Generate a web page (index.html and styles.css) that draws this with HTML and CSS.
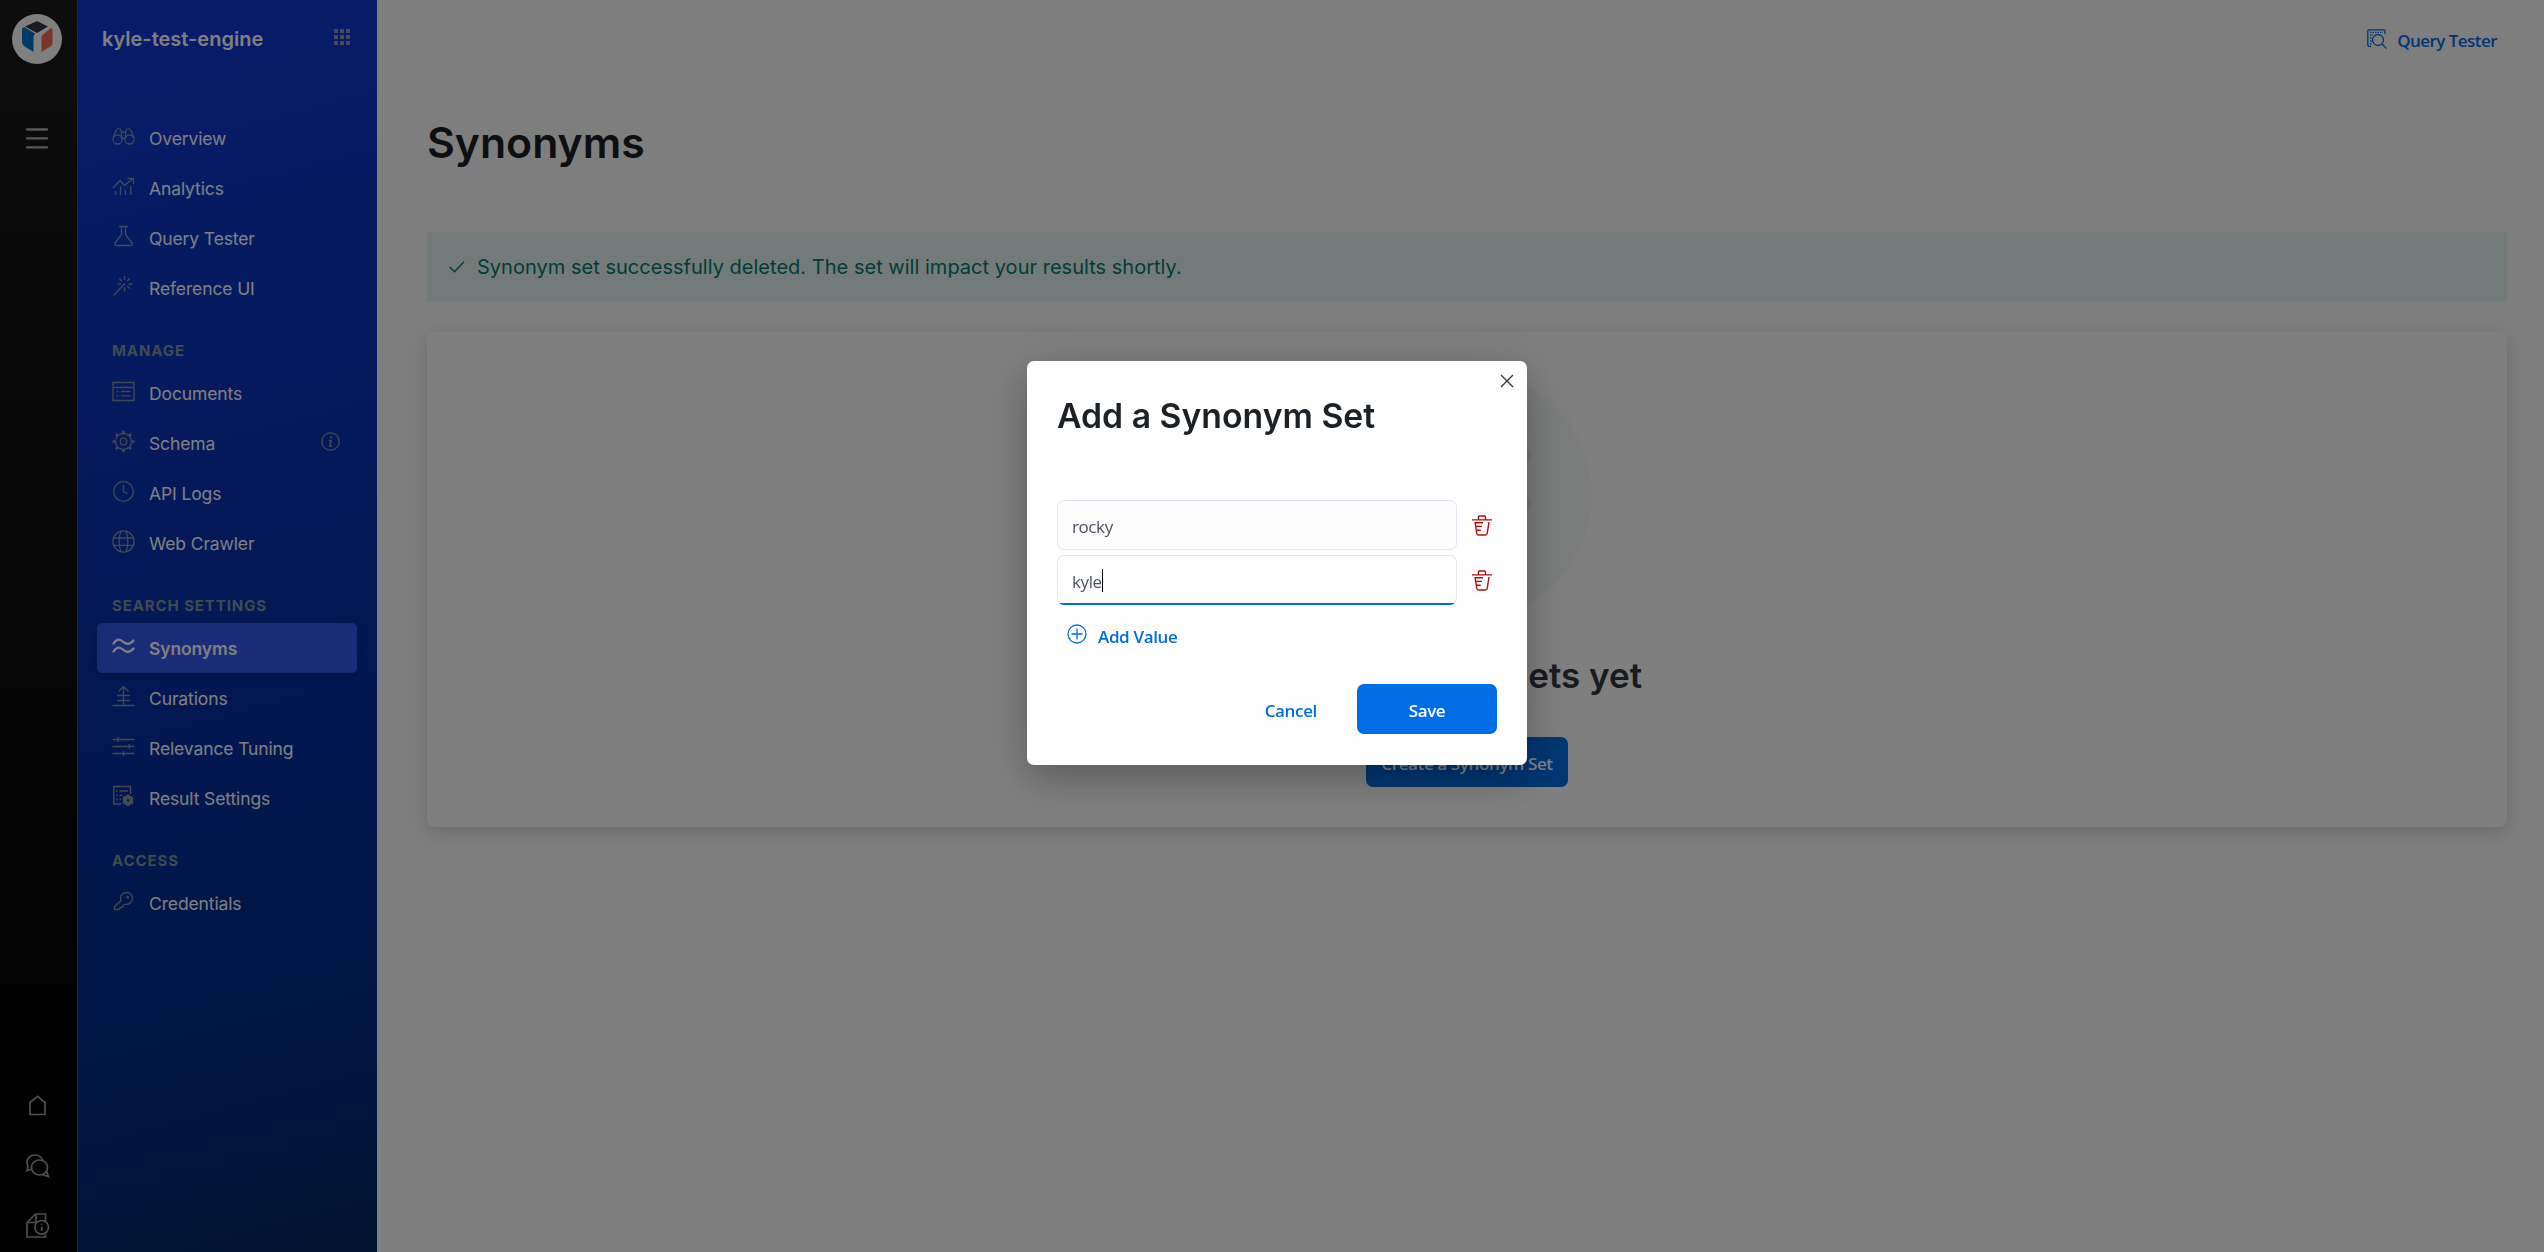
FILE: index.html
```html
<!DOCTYPE html>
<html lang="en">
<head>
<meta charset="utf-8">
<title>Synonyms</title>
<link rel="stylesheet" href="styles.css">
</head>
<body>
<div class="app">
  <aside class="rail">
    <div class="logo">
      <svg width="32" height="32" viewBox="0 0 32 32"><path d="M4 5.500 15 0.500Q16 0 17 0.500L27 5.500 16 12Z" fill="#343741"/><path d="M1 7.500 3 6 14 12.500Q12.500 14.500 12.500 17V31L3 25Q1 23.500 1 21Z" fill="#0077cc"/><path d="M31.500 8V22Q31.500 24 30 25L20.500 31V17Q20.500 14.500 22 13.500L30 7Z" fill="#f26b4a"/></svg>
    </div>
    <svg class="burger" width="22" height="21" viewBox="0 0 22 21"><path d="M1 1.500H21M1 10.300H21M1 19.300H21" stroke-width="2.300" stroke-linecap="round"/></svg>
    <div class="rail-bottom">
      <svg width="25" height="25" viewBox="0 0 25 25"><path d="M5 21.500V9.500L12.500 3.300 20 9.500V21.500Z"/></svg>
      <svg width="25" height="25" viewBox="0 0 25 25"><ellipse cx="14.500" cy="14.500" rx="8" ry="7.500"/><path d="M18 7.500C16.500 4 13.500 2 10 2 5.500 2 2 5 2 9 2 11 2.800 12.500 3 13.500L2 17.500 7 16M21.500 18 23.300 23.500 17 21.500"/></svg>
      <svg width="25" height="25" viewBox="0 0 25 25"><path d="M20.500 8.500V1H10.500L2 9.500V24H20.500V21.500M11 1V9.500H2"/><circle cx="16.700" cy="14.300" r="6.800"/><path d="M16.700 13.500V17.700M16.700 10.700V11.800"/></svg>
    </div>
  </aside>

  <aside class="sidebar">
    <header class="side-head">
      <span>kyle-test-engine</span>
      <svg width="16" height="16" viewBox="0 0 16 16"><path d="M0 0h4v4H0zM6 0h4v4H6zM12 0h4v4h-4zM0 6h4v4H0zM6 6h4v4H6zM12 6h4v4h-4zM0 12h4v4H0zM6 12h4v4H6zM12 12h4v4h-4z"/></svg>
    </header>
    <nav class="nav">
      <a class="item"><svg viewBox="0 0 23 23"><circle cx="5.500" cy="14.500" r="4.500"/><circle cx="17.500" cy="14.500" r="4.500"/><path d="M1.300 12.500 4 5.500Q5 3.500 7 3.700 9 3.800 9 5.500L10 14M21.700 12.500 19 5.500Q18 3.500 16 3.700 14 3.800 14 5.500L13 14M9.200 7H13.800M10 13.500H13"/></svg>Overview</a>
      <a class="item"><svg viewBox="0 0 23 23"><path d="M1 13 8 5.500 12.500 10.500 21 3.500M15.500 3.500H21.500V9M3.500 16V20M8.500 11.500V20M13.500 15V20M18.800 11V20"/></svg>Analytics</a>
      <a class="item"><svg viewBox="0 0 23 23"><path d="M7 1.500H16M9.500 1.500V9.500L3 18Q2.200 20.500 4.500 20.500H18.500Q20.800 20.500 20 18L13.500 9.500V1.500"/></svg>Query Tester</a>
      <a class="item"><svg viewBox="0 0 23 23"><path d="M1.500 20.500 13 8.500M12.500 1V4.800M7.300 3.500 9.800 6M17.700 3.500 15.200 6M5.500 9H9M16.500 9H20.500M15.200 11 17.700 13.500M12.500 12.500V16.500"/></svg>Reference UI</a>

      <h3>Manage</h3>
      <a class="item"><svg viewBox="0 0 23 23"><path d="M1 2.500H22V20.500H1ZM1 7.500H22M4.500 11.500H6.500M9 11.500H18.500M4.500 15.800H6.500M9 15.800H18.500"/></svg>Documents</a>
      <a class="item"><svg viewBox="0 0 23 23"><circle cx="11.500" cy="11.500" r="8"/><circle cx="11.500" cy="11.500" r="3.300"/><path d="M11.500 3.500V.7M11.500 22.300V19.500M3.500 11.500H.5M22.500 11.500H19.500M5.800 5.800 3.900 3.900M17.200 5.800 19.100 3.900M5.800 17.200 3.900 19.100M17.200 17.200 19.100 19.100" stroke-width="2.500"/></svg>Schema
        <svg class="info" viewBox="0 0 23 23"><circle cx="11.500" cy="11.500" r="8.700"/><path d="M9.800 10.500H12L11 16.200H13" stroke-width="1.600"/><path d="M12.200 6.300V8.200" stroke-width="2"/></svg></a>
      <a class="item"><svg viewBox="0 0 23 23"><circle cx="11.500" cy="11.500" r="9.800"/><path d="M11.500 5V11.500L15.500 13.800"/></svg>API Logs</a>
      <a class="item"><svg viewBox="0 0 23 23"><circle cx="11.500" cy="11.500" r="10.600"/><path d="M9 1.300C6.500 7 6.500 16 9 21.700M14 1.300C16.500 7 16.500 16 14 21.700M2 8H21M2 15.300H21"/></svg>Web Crawler</a>

      <h3>Search Settings</h3>
      <a class="item active"><svg viewBox="0 0 23 23"><path d="M1.500 8.500C5 3 8 4 11.500 7S18.500 9 21.500 5.500M1.500 16.500C5 11 8 12 11.500 15S18.500 17 21.500 13.500"/></svg>Synonyms</a>
      <a class="item"><svg viewBox="0 0 23 23"><path d="M.5 20.500H22.500M11.500 20V1.500M6.500 6.500 11.500 1.500 16.500 6.500M5 10.500H18M5 15.500H18"/></svg>Curations</a>
      <a class="item"><svg viewBox="0 0 23 23"><path d="M.5 4.500H22.500M.5 11.500H22.500M.5 18.500H22.500M6 2V7M17.200 9V14M11.500 16V21"/></svg>Relevance Tuning</a>
      <a class="item"><svg viewBox="0 0 23 23"><path d="M18.500 9V1.500H1.800V19H9.500M4 6H5.500M7.500 6H16M4 10.300H5.500M7.500 10.300H10.500M4 14.500H5.500M7.500 14.500H9"/><circle cx="16" cy="15.300" r="3.200" stroke-width="4"/><path d="M16 9.700V21M11 12.500 21 18.200M11 18.200 21 12.500" stroke-width="2.800" stroke-dasharray="2.200 7.100"/></svg>Result Settings</a>

      <h3>Access</h3>
      <a class="item"><svg viewBox="0 0 23 23"><path d="M8.700 11C7.500 6 10 2.500 14.500 2.500A5.800 5.800 0 0 1 20.500 8.300C20.500 12.500 17 15 13 14.200L11 15.500V17.200H8.800L6.500 19.500H2.500V16.500Z"/><circle cx="15.800" cy="7.200" r=".8"/></svg>Credentials</a>
    </nav>
  </aside>

  <main class="main">
    <div class="topbar">
      <a class="link"><svg width="20" height="20" viewBox="0 0 20 20"><path d="M18 5V1.800Q18 .8 17 .8H1.800Q.8 .8 .8 1.800V16Q.8 17.500 4 17.500"/><path d="M3 3.300H16M3 6H6M3 9H5M3 12H5M3 15H5" stroke-dasharray="1.500 1"/><circle cx="11" cy="11" r="5.500"/><path d="M15 15 19.500 19.500"/></svg><span>Query Tester</span></a>
    </div>
    <h1>Synonyms</h1>
    <div class="banner"><svg width="16" height="12" viewBox="0 0 16 12"><path d="M.7 6 5.500 10.800 15 .8"/></svg>Synonym set successfully deleted. The set will impact your results shortly.</div>
    <section class="card">
      <div class="art"><svg width="132" height="90" viewBox="0 0 132 90"><path d="M10 36C30 0 50 5 66 20S100 35 121 15M10 80C30 45 50 50 66 65S100 80 121 63"/></svg></div>
      <h2>No synonym sets yet</h2>
      <button class="btn create">Create a Synonym Set</button>
    </section>
  </main>
</div>

<div class="overlay">
  <div class="modal">
    <svg class="close" width="14" height="14" viewBox="0 0 14 14"><path d="M1 1 13 13M13 1 1 13"/></svg>
    <h2>Add a Synonym Set</h2>
    <div class="row">
      <div class="field">rocky</div>
      <svg class="trash" width="20" height="21" viewBox="0 0 20 21"><path d="M0 4.900H20M6.500 4.500V1.900Q6.500 1 7.400 1H12.600Q13.500 1 13.500 1.900V4.500M3 7 4.800 18.500Q5 20 6.500 20H13.500Q15 20 15.200 18.500L17 7M3 7.700H11M3.500 11.400H10M4 15.300H8.800"/></svg>
    </div>
    <div class="row">
      <div class="field focus">kyle<span class="caret"></span></div>
      <svg class="trash" width="20" height="21" viewBox="0 0 20 21"><path d="M0 4.900H20M6.500 4.500V1.900Q6.500 1 7.400 1H12.600Q13.500 1 13.500 1.900V4.500M3 7 4.800 18.500Q5 20 6.500 20H13.500Q15 20 15.200 18.500L17 7M3 7.700H11M3.500 11.400H10M4 15.300H8.800"/></svg>
    </div>
    <a class="link add"><svg width="20" height="20" viewBox="0 0 20 20"><circle cx="10" cy="10" r="9"/><path d="M4.500 10H15.500M10 4.500V15.500"/></svg><span>Add Value</span></a>
    <div class="actions">
      <a class="link"><span>Cancel</span></a>
      <button class="btn save">Save</button>
    </div>
  </div>
</div>
</body>
</html>
```

FILE: styles.css
```css
* { box-sizing: border-box; }
body { margin: 0; font-family: Inter, sans-serif; color: #1d1e24; }
h1, h2, h3 { margin: 0; }
svg { display: block; flex: none; fill: none; stroke: currentColor; }

.app { display: flex; height: 1252px; overflow: hidden; background: #fdfdfe; }

.rail {
  width: 77px;
  display: flex;
  flex-direction: column;
  align-items: center;
  padding: 14px 3px 14px 0;
  color: #b0b0b0;
  background: linear-gradient(#1a1a1a, #000);
}
.logo {
  width: 50px;
  height: 50px;
  border-radius: 50%;
  background: #fff;
  display: flex;
  justify-content: center;
  padding-top: 7px;
}
.logo svg { stroke: none; }
.burger { margin-top: 64px; }
.rail-bottom {
  margin-top: auto;
  display: flex;
  flex-direction: column;
  gap: 35px;
  stroke-width: 1.7;
  color: #9c9c9c;
}

.sidebar {
  width: 300px;
  border-left: 1px solid #2a4ac4;
  color: #fff;
  background: linear-gradient(165deg, #1038d8 0%, #0b33bb 30%, #052fa0 60%, #002a78 90%, #00265e 100%);
}
.side-head {
  height: 78px;
  padding: 0 27px 0 24px;
  display: flex;
  align-items: center;
  justify-content: space-between;
  font-size: 20px;
  font-weight: 600;
}
.side-head svg { fill: #8f96a8; stroke: none; margin-top: -4px; }
.nav { padding: 35px 20px 0 19px; }
.nav h3 {
  height: 55px;
  padding: 28px 0 0 15px;
  font-size: 15px;
  line-height: 20px;
  font-weight: 700;
  letter-spacing: .9px;
  text-transform: uppercase;
  color: #8494a0;
}
.item {
  height: 50px;
  padding: 0 15px;
  display: flex;
  align-items: center;
  gap: 14px;
  font-size: 17.500px;
  letter-spacing: -.12px;
  border-radius: 5px;
}
.item svg {
  width: 23px;
  height: 23px;
  margin-top: -3px;
  color: #8494a0;
  stroke-width: 1.3;
}
.item .info { margin-left: auto; }
.active { font-weight: 600; background: #3458f0; box-shadow: 0 3px 8px rgba(0, 0, 0, .25); }
.active svg { color: #fff; stroke-width: 2.300; stroke-linecap: round; }

.main { flex: 1; padding: 0 37px 0 50px; }
.topbar { height: 78px; display: flex; align-items: center; justify-content: flex-end; padding-right: 10px; }
.link {
  display: flex;
  align-items: center;
  gap: 10px;
  font: 600 17px "Open Sans", sans-serif;
  letter-spacing: -.35px;
  color: #006de4;
}
.link span { padding-top: 2px; }
.topbar .link { letter-spacing: -.55px; }
.link svg { stroke-width: 1.3; }
h1 { height: 154px; padding-top: 39px; font-size: 42.750px; line-height: 52px; font-weight: 600; }
.banner {
  height: 70px;
  padding-left: 22px;
  display: flex;
  align-items: center;
  gap: 12px;
  font-size: 20px;
  letter-spacing: .02px;
  color: #007a70;
  background: #e6f7f4;
}
.banner svg { stroke-width: 1.4; }
.card {
  margin-top: 30px;
  height: 495px;
  padding-top: 38px;
  display: flex;
  flex-direction: column;
  align-items: center;
  border-radius: 8px;
  background: #fff;
  box-shadow: 0 5px 18px rgba(0, 0, 0, .15);
}
.art {
  width: 250px;
  height: 250px;
  border-radius: 50%;
  background: #f4fbf9;
  color: #e4e8ee;
  display: flex;
  align-items: center;
  justify-content: center;
}
.art svg { stroke-width: 18; stroke-linecap: round; margin-top: -20px; }
.card h2 { margin-top: 33px; padding-right: 4px; font-size: 35px; line-height: 45px; font-weight: 600; color: #343741; }
.btn {
  height: 50px;
  padding: 2px 0 0;
  border: 0;
  border-radius: 7px;
  font: 600 17px "Open Sans", sans-serif;
  letter-spacing: -.38px;
  color: #fff;
  background: #006de4;
}
.create { width: 202px; margin-top: 39px; }

.overlay {
  position: fixed;
  inset: 0;
  background: rgba(0, 0, 0, .5);
  display: flex;
  justify-content: center;
  align-items: flex-start;
  padding: 361px 0 0 10px;
}
.modal {
  position: relative;
  width: 500px;
  height: 404px;
  padding: 30px;
  border-radius: 7px;
  background: #fff;
  box-shadow: 0 15px 35px rgba(0, 0, 0, .2), 0 5px 60px rgba(0, 0, 0, .12);
}
.close { position: absolute; top: 13px; right: 13px; stroke-width: 1.4; color: #343741; }
.modal h2 { height: 109px; font-size: 33.750px; line-height: 50px; font-weight: 600; color: #1c2126; }
.row { display: flex; align-items: center; gap: 15px; margin-bottom: 5px; }
.field {
  width: 400px;
  height: 50px;
  padding: 2px 14px 0;
  display: flex;
  align-items: center;
  border: 1px solid #e6e5f5;
  border-radius: 7px;
  font: 400 17px "Open Sans", sans-serif;
  letter-spacing: -.4px;
  color: #4a535e;
  background: #fdfdfe;
}
.focus { background: linear-gradient(#006de4, #006de4) bottom / 100% 2px no-repeat border-box #fff; border-bottom-color: transparent; }
.caret { width: 1px; height: 23px; margin-top: -2px; background: #000; }
.trash { color: #b00d0d; stroke-width: 1.4; }
.add { height: 50px; padding-left: 10px; gap: 11px; margin-top: 1px; }
.add svg { margin-top: -2px; }
.actions { display: flex; justify-content: flex-end; align-items: center; gap: 40px; margin-top: 24px; }
.save { width: 140px; }
```
